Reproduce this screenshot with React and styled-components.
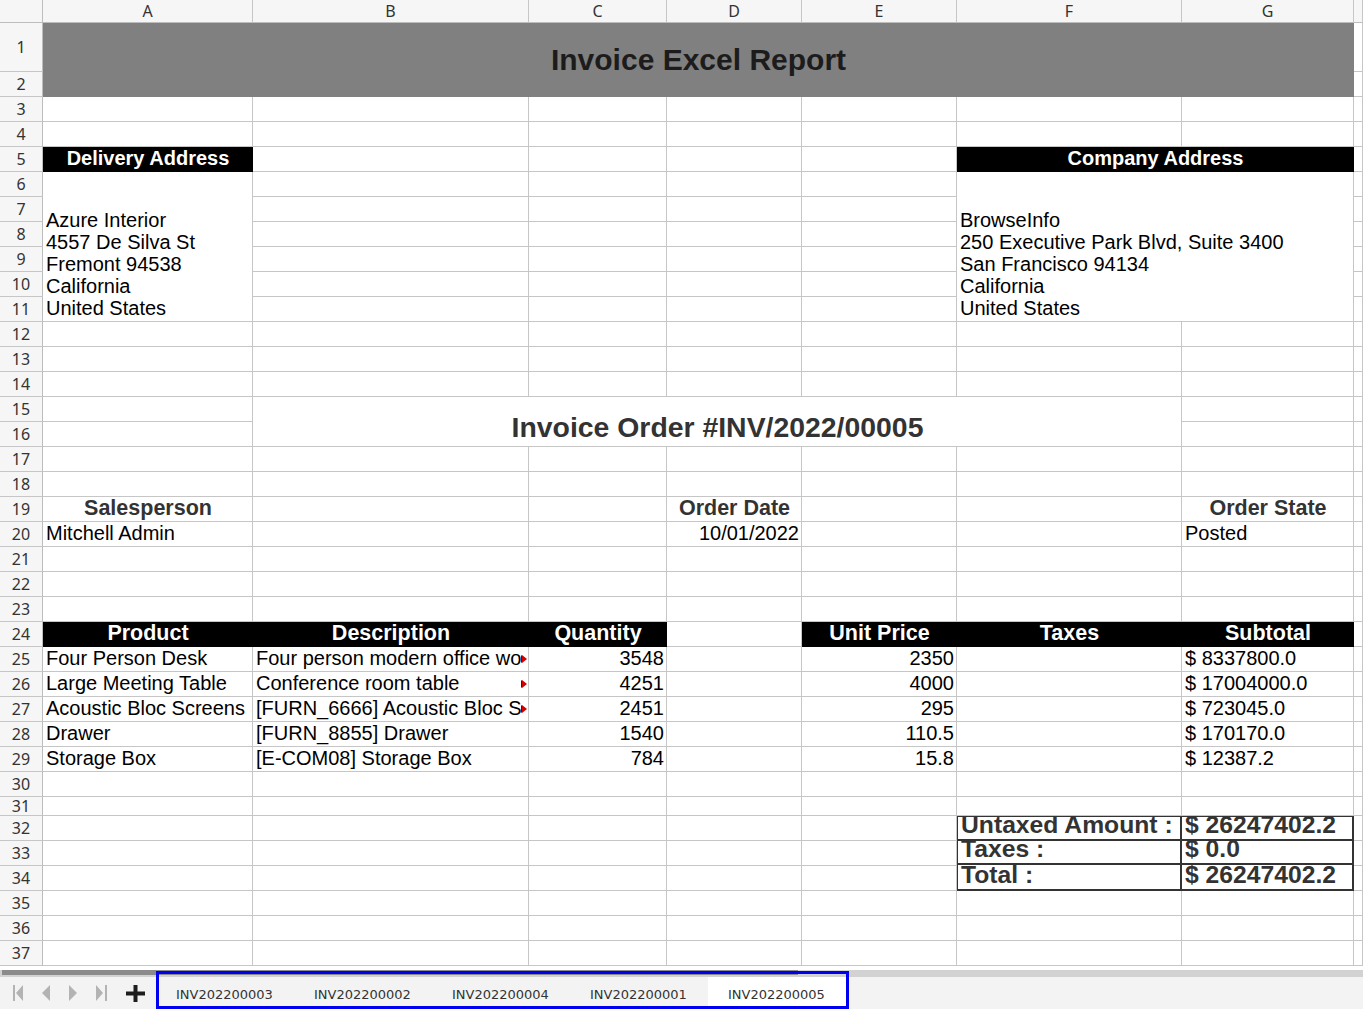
import React from "react";
import styled, { createGlobalStyle } from "styled-components";

const GlobalStyle = createGlobalStyle`
  html, body {
    margin: 0;
    padding: 0;
    background: #fff;
    overflow: hidden;
  }
  body {
    font-family: "Liberation Sans", Arial, sans-serif;
  }
`;

const GRID_LINE = "#c6c6c6";
const LETTERS = ["A", "B", "C", "D", "E", "F", "G", ""];

const Page = styled.div`
  width: 1363px;
  height: 1009px;
  display: flex;
  flex-direction: column;
`;

const Sheet = styled.div`
  display: grid;
  grid-template-columns: 43px 210px 276px 138px 135px 155px 225px 172px 1fr;
  grid-template-rows: 23px 49px repeat(29, 25px) 19px repeat(6, 25px);
  height: 966px;
  flex: none;
  overflow: hidden;
`;

const Corner = styled.div`
  grid-row: 1;
  grid-column: 1;
  background: #f6f6f6;
  border-right: 1px solid #bdbdbd;
  border-bottom: 1px solid #bdbdbd;
`;

const ColHead = styled.div`
  grid-row: 1;
  grid-column: ${(p) => p.$c + 2};
  background: #f6f6f6;
  border-right: 1px solid ${GRID_LINE};
  border-bottom: 1px solid #bdbdbd;
  font-family: "Noto Sans", "Open Sans", sans-serif;
  font-size: 16px;
  line-height: 1;
  color: #333;
  display: flex;
  align-items: center;
  justify-content: center;
  overflow: hidden;
`;

const RowHead = styled.div`
  grid-row: ${(p) => p.$r + 1};
  grid-column: 1;
  background: #f6f6f6;
  border-right: 1px solid #bdbdbd;
  border-bottom: 1px solid ${GRID_LINE};
  font-family: "Noto Sans", "Open Sans", sans-serif;
  font-size: 16px;
  line-height: 1;
  color: #333;
  display: flex;
  align-items: center;
  justify-content: center;
  overflow: hidden;
`;

const Cell = styled.div`
  grid-row: ${(p) => p.$r + 1} / span ${(p) => p.$rs || 1};
  grid-column: ${(p) => p.$c + 2} / span ${(p) => p.$cs || 1};
  position: relative;
  min-width: 0;
  display: flex;
  align-items: flex-end;
  justify-content: ${(p) =>
    p.$align === "right" ? "flex-end" : p.$align === "center" ? "center" : "flex-start"};
  padding: 0 2px 1px 3px;
  background: #fff;
  border-right: 1px solid ${GRID_LINE};
  border-bottom: 1px solid ${GRID_LINE};
  font-size: 20px;
  line-height: 23px;
  color: #000;
  white-space: nowrap;
`;

const TitleCell = styled(Cell)`
  align-items: center;
  justify-content: center;
  padding-bottom: 0;
  background: #808080;
  border-color: #808080;
  font-size: 30px;
  line-height: 34px;
  font-weight: bold;
  color: #1c1c1c;
`;

const BandCell = styled(Cell)`
  justify-content: center;
  background: #000;
  border-color: #000;
  color: #fff;
  font-weight: bold;
  font-size: ${(p) => p.$size || 20}px;
  line-height: 23px;
`;

const AddressCell = styled(Cell)`
  flex-direction: column;
  justify-content: flex-end;
  align-items: flex-start;
  padding-bottom: 2px;
  line-height: 22px;
`;

const HeadingCell = styled(Cell)`
  justify-content: center;
  padding-bottom: 3px;
  font-size: 28.4px;
  line-height: 32px;
  font-weight: bold;
  color: #333;
`;

const LabelCell = styled(Cell)`
  justify-content: center;
  font-size: 21.5px;
  line-height: 24px;
  font-weight: bold;
  color: #333;
`;

const ClipText = styled.span`
  display: block;
  min-width: 0;
  overflow: hidden;
  padding-right: 4px;
`;

const Marker = styled.span`
  position: absolute;
  right: 1px;
  top: 8px;
  width: 0;
  height: 0;
  border-top: 4px solid transparent;
  border-bottom: 4px solid transparent;
  border-left: 5px solid #d40000;
  filter: drop-shadow(-1px 0 0 #222);
`;

const TotalsBox = styled.div`
  grid-row: 33 / span 3;
  grid-column: 7 / span 2;
  margin: -1px 0 0 -1px;
  border: 2px solid #333;
  background: #fff;
  display: grid;
  grid-template-columns: 224px 1fr;
  grid-template-rows: repeat(3, minmax(0, 1fr));
  min-height: 0;
`;

const TotalCell = styled.div`
  min-height: 0;
  display: flex;
  align-items: flex-end;
  padding: 0 0 1px 3px;
  border-right: ${(p) => (p.$last ? "none" : "2px solid #333")};
  border-bottom: ${(p) => (p.$bottom ? "none" : "2px solid #333")};
  font-size: 24.7px;
  line-height: 26px;
  font-weight: bold;
  color: #333;
  white-space: nowrap;
`;

const Bottom = styled.div`
  position: relative;
  flex: 1;
  display: flex;
  flex-direction: column;
  background: #fff;
`;

const ScrollTrack = styled.div`
  margin-top: 4px;
  height: 7px;
  background: #d2d2d2;
  padding-left: 2px;
`;

const ScrollThumb = styled.div`
  width: 796px;
  height: 5px;
  background: #8b8b8b;
`;

const TabRow = styled.div`
  flex: 1;
  display: flex;
  background: #f3f3f3;
`;

const Nav = styled.div`
  width: 156px;
  display: flex;
  align-items: center;
  gap: 19px;
  padding-left: 13px;
  box-sizing: border-box;
`;

const Tabs = styled.div`
  display: flex;
`;

const Tab = styled.div`
  width: 138px;
  box-sizing: border-box;
  padding: 2px 0 0 20px;
  display: flex;
  align-items: center;
  background: ${(p) => (p.$active ? "#fff" : "transparent")};
  font-family: "DejaVu Sans", "Noto Sans", sans-serif;
  font-size: 13px;
  color: #333;
`;

const Highlight = styled.div`
  position: absolute;
  left: 156px;
  top: 5px;
  width: 693px;
  height: 38px;
  box-sizing: border-box;
  border: 3px solid #0000f0;
  pointer-events: none;
`;

const Icon = styled.svg`
  display: block;
  flex: none;
`;

const ADDRESS_DELIVERY = ["Azure Interior", "4557 De Silva St", "Fremont 94538", "California", "United States"];
const ADDRESS_COMPANY = [
  "BrowseInfo",
  "250 Executive Park Blvd, Suite 3400",
  "San Francisco 94134",
  "California",
  "United States",
];

const lines = [
  ["Four Person Desk", "Four person modern office workstation", 3548, 2350, "$ 8337800.0", true],
  ["Large Meeting Table", "Conference room table", 4251, 4000, "$ 17004000.0", true],
  ["Acoustic Bloc Screens", "[FURN_6666] Acoustic Bloc Screens", 2451, 295, "$ 723045.0", true],
  ["Drawer", "[FURN_8855] Drawer", 1540, 110.5, "$ 170170.0", false],
  ["Storage Box", "[E-COM08] Storage Box", 784, 15.8, "$ 12387.2", false],
];

const totals = [
  ["Untaxed Amount :", "$ 26247402.2"],
  ["Taxes :", "$ 0.0"],
  ["Total :", "$ 26247402.2"],
];

// merged ranges; any other position gets a plain empty cell
const merges = [
  { r: 1, c: 0, rs: 2, cs: 7 },
  { r: 5, c: 5, rs: 1, cs: 2 },
  { r: 6, c: 0, rs: 6, cs: 1 },
  { r: 6, c: 5, rs: 6, cs: 2 },
  { r: 15, c: 1, rs: 2, cs: 5 },
  { r: 32, c: 5, rs: 3, cs: 2 },
];

function covered(r, c) {
  return merges.some((m) => r >= m.r && r < m.r + m.rs && c >= m.c && c < m.c + m.cs);
}

function buildCells() {
  const out = [];
  const filled = new Set();
  const put = (r, c, node) => {
    filled.add(`${r}-${c}`);
    out.push(node);
  };

  put(1, 0, <TitleCell key="title" $r={1} $c={0} $rs={2} $cs={7}>Invoice Excel Report</TitleCell>);
  put(5, 0, <BandCell key="deliv" $r={5} $c={0}>Delivery Address</BandCell>);
  put(5, 5, <BandCell key="comp" $r={5} $c={5} $cs={2}>Company Address</BandCell>);
  put(
    6,
    0,
    <AddressCell key="addr1" $r={6} $c={0} $rs={6}>
      {ADDRESS_DELIVERY.map((l) => (
        <span key={l}>{l}</span>
      ))}
    </AddressCell>
  );
  put(
    6,
    5,
    <AddressCell key="addr2" $r={6} $c={5} $rs={6} $cs={2}>
      {ADDRESS_COMPANY.map((l) => (
        <span key={l}>{l}</span>
      ))}
    </AddressCell>
  );
  put(
    15,
    1,
    <HeadingCell key="order" $r={15} $c={1} $rs={2} $cs={5}>
      Invoice Order #INV/2022/00005
    </HeadingCell>
  );

  put(19, 0, <LabelCell key="l1" $r={19} $c={0}>Salesperson</LabelCell>);
  put(19, 3, <LabelCell key="l2" $r={19} $c={3}>Order Date</LabelCell>);
  put(19, 6, <LabelCell key="l3" $r={19} $c={6}>Order State</LabelCell>);
  put(20, 0, <Cell key="v1" $r={20} $c={0}>Mitchell Admin</Cell>);
  put(20, 3, <Cell key="v2" $r={20} $c={3} $align="right">10/01/2022</Cell>);
  put(20, 6, <Cell key="v3" $r={20} $c={6}>Posted</Cell>);

  const heads = ["Product", "Description", "Quantity", null, "Unit Price", "Taxes", "Subtotal"];
  heads.forEach((h, c) => {
    if (h === null) return;
    put(24, c, <BandCell key={`h${c}`} $r={24} $c={c} $size={21.5}>{h}</BandCell>);
  });

  lines.forEach(([product, desc, qty, price, sub, clipped], i) => {
    const r = 25 + i;
    put(r, 0, <Cell key={`p${r}`} $r={r} $c={0}>{product}</Cell>);
    put(
      r,
      1,
      <Cell key={`d${r}`} $r={r} $c={1} style={{ paddingRight: clipped ? 6 : 2 }}>
        <ClipText>{desc}</ClipText>
        {clipped && <Marker />}
      </Cell>
    );
    put(r, 2, <Cell key={`q${r}`} $r={r} $c={2} $align="right">{qty}</Cell>);
    put(r, 4, <Cell key={`u${r}`} $r={r} $c={4} $align="right">{price}</Cell>);
    put(r, 6, <Cell key={`s${r}`} $r={r} $c={6}>{sub}</Cell>);
  });

  for (let r = 1; r <= 37; r++) {
    for (let c = 0; c < 8; c++) {
      if (filled.has(`${r}-${c}`) || covered(r, c)) continue;
      out.push(<Cell key={`e${r}-${c}`} $r={r} $c={c} />);
    }
  }
  return out;
}

const FirstIcon = () => (
  <Icon width="10" height="16" viewBox="0 0 10 16">
    <rect x="0" y="0" width="2" height="16" fill="#b3b3b3" />
    <polygon points="10,0 3,8 10,16" fill="#b3b3b3" />
  </Icon>
);
const PrevIcon = () => (
  <Icon width="8" height="16" viewBox="0 0 8 16">
    <polygon points="8,0 0,8 8,16" fill="#b3b3b3" />
  </Icon>
);
const NextIcon = () => (
  <Icon width="8" height="16" viewBox="0 0 8 16">
    <polygon points="0,0 8,8 0,16" fill="#b3b3b3" />
  </Icon>
);
const LastIcon = () => (
  <Icon width="11" height="16" viewBox="0 0 11 16">
    <polygon points="0,0 7,8 0,16" fill="#b3b3b3" />
    <rect x="9" y="0" width="2" height="16" fill="#b3b3b3" />
  </Icon>
);
const PlusIcon = () => (
  <Icon width="19" height="17" viewBox="0 0 19 17">
    <rect x="0" y="6.5" width="19" height="4" fill="#1e1e1e" />
    <rect x="7.5" y="0" width="4" height="17" fill="#1e1e1e" />
  </Icon>
);

const SHEETS = ["INV202200003", "INV202200002", "INV202200004", "INV202200001", "INV202200005"];

export default function App() {
  const rows = Array.from({ length: 37 }, (_, i) => i + 1);
  return (
    <Page>
      <GlobalStyle />
      <Sheet>
        <Corner />
        {LETTERS.map((l, c) => (
          <ColHead key={c} $c={c}>{l}</ColHead>
        ))}
        {rows.map((r) => (
          <RowHead key={r} $r={r}>{r}</RowHead>
        ))}
        {buildCells()}
        <TotalsBox>
          {totals.map(([label, value], i) => (
            <React.Fragment key={label}>
              <TotalCell $bottom={i === totals.length - 1}>{label}</TotalCell>
              <TotalCell $last $bottom={i === totals.length - 1}>{value}</TotalCell>
            </React.Fragment>
          ))}
        </TotalsBox>
      </Sheet>
      <Bottom>
        <ScrollTrack>
          <ScrollThumb />
        </ScrollTrack>
        <TabRow>
          <Nav>
            <FirstIcon />
            <PrevIcon />
            <NextIcon />
            <LastIcon />
            <PlusIcon />
          </Nav>
          <Tabs>
            {SHEETS.map((s) => (
              <Tab key={s} $active={s === "INV202200005"}>{s}</Tab>
            ))}
          </Tabs>
        </TabRow>
        <Highlight />
      </Bottom>
    </Page>
  );
}
